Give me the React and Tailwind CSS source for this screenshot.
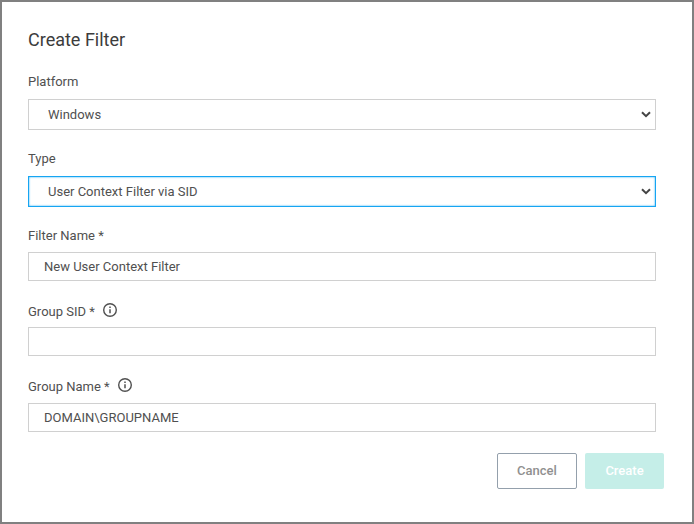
import { useState } from 'react';

function InfoIcon() {
  return (
    <svg className="ml-[7px] size-4 -translate-y-0.5" viewBox="0 0 16 16" fill="none">
      <circle cx="8" cy="8" r="6.3" stroke="#505050" strokeWidth="1.4" />
      <path d="M8 7.2v4M8 4.6v1.4" stroke="#505050" strokeWidth="1.5" />
    </svg>
  );
}

function Label({ children, info }) {
  return (
    <div className="flex h-5 items-center text-[13px] leading-5">
      <span>{children}</span>
      {info && <InfoIcon />}
    </div>
  );
}

function Select({ value, focused }) {
  return (
    <div className="relative">
      <select
        defaultValue={value}
        className={`block h-[31px] w-full appearance-none border bg-white px-[19px] text-[13px] outline-none ${
          focused ? 'border-[#16a5f2] shadow-[inset_0_0_2px_#16a5f2]' : 'border-[#d0d0d0]'
        }`}
      >
        <option>{value}</option>
      </select>
      <svg className="pointer-events-none absolute top-3 right-1 h-2 w-3" viewBox="0 0 12 8" fill="none">
        <path d="M2 1.2L6 5.2L10 1.2" stroke="#444444" strokeWidth="2" />
      </svg>
    </div>
  );
}

function Input({ initial }) {
  const [value, setValue] = useState(initial);
  return (
    <input
      value={value}
      onChange={(e) => setValue(e.target.value)}
      className="block h-[29px] w-full border border-[#d0d0d0] bg-white px-[15px] text-[13px] outline-none"
    />
  );
}

export default function App() {
  return (
    <div className="h-[524px] w-[694px] border-2 border-[#808080] bg-white pt-[26px] pr-7 pl-[26px] font-['Roboto',sans-serif] text-[#505050]">
      <div className="w-[628px]">
        <h1 className="h-6 text-[18px] leading-6 text-[#3c3c3c]">Create Filter</h1>
        <div className="mt-5">
          <Label>Platform</Label>
          <div className="mt-[7px]">
            <Select value="Windows" />
          </div>
        </div>
        <div className="mt-[19px]">
          <Label>Type</Label>
          <div className="mt-[7px]">
            <Select value="User Context Filter via SID" focused />
          </div>
        </div>
        <div className="mt-[19px]">
          <Label>Filter Name *</Label>
          <div className="mt-1.5">
            <Input initial="New User Context Filter" />
          </div>
        </div>
        <div className="mt-[21px]">
          <Label info>Group SID *</Label>
          <div className="mt-[5px]">
            <Input initial="" />
          </div>
        </div>
        <div className="mt-[21px]">
          <Label info>Group Name *</Label>
          <div className="mt-1.5">
            <Input initial="DOMAIN\GROUPNAME" />
          </div>
        </div>
      </div>
      <div className="mt-[21px] flex justify-end gap-2">
        <button className="h-9 w-20 rounded-[2px] border border-[#94a0ac] text-[13px] font-medium text-[#909090]">Cancel</button>
        <button className="h-9 w-[79px] rounded-[2px] bg-[#c5eee8] text-[13px] font-medium text-white">Create</button>
      </div>
    </div>
  );
}
